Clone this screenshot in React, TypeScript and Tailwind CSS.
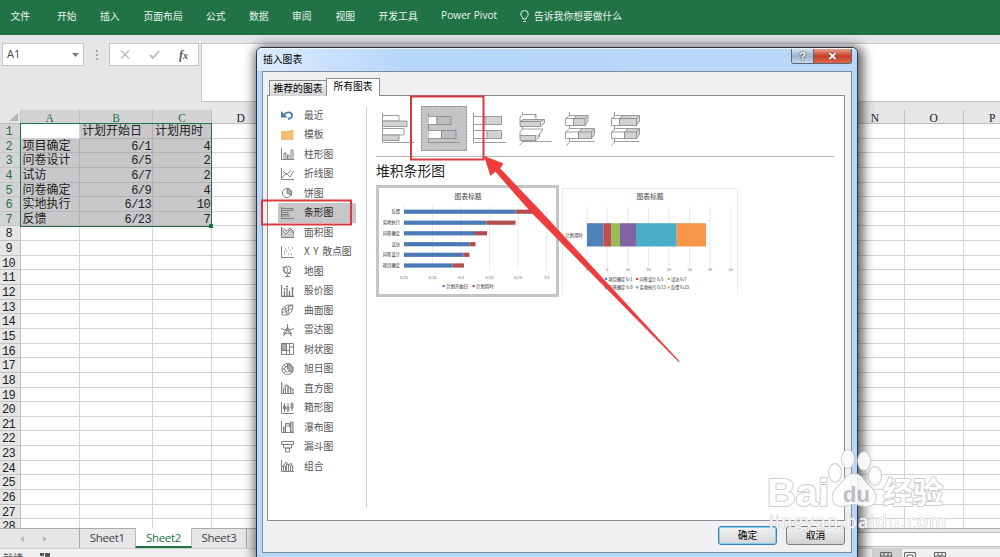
import type { ReactNode } from "react";

const ribbonTabs = [
  { label: "文件", cls: "w-[46.5px]" },
  { label: "开始", cls: "w-[43px]" },
  { label: "插入", cls: "w-[43.5px]" },
  { label: "页面布局", cls: "w-[62.5px]" },
  { label: "公式", cls: "w-[43px]" },
  { label: "数据", cls: "w-[43px]" },
  { label: "审阅", cls: "w-[43.5px]" },
  { label: "视图", cls: "w-[43px]" },
  { label: "开发工具", cls: "w-[62.5px]" },
];

const tasks = [
  ["", "计划开始日", "计划用时"],
  ["项目确定", "6/1", "4"],
  ["问卷设计", "6/5", "2"],
  ["试访", "6/7", "2"],
  ["问卷确定", "6/9", "4"],
  ["实地执行", "6/13", "10"],
  ["反馈", "6/23", "7"],
];

const columns = [
  { name: "A", cls: "w-[59.5px]" },
  { name: "B", cls: "w-[73px]" },
  { name: "C", cls: "w-[59px]" },
  { name: "D", cls: "w-[58.5px]" },
  { name: "", cls: "w-[575.5px]" },
  { name: "N", cls: "w-[59px]" },
  { name: "O", cls: "w-[58.5px]" },
  { name: "P", cls: "w-[58.5px]" },
];

const chartTypes: { name: string; icon: ReactNode }[] = [
  { name: "最近", icon: <><path d="M3 6C5 2.500 10 2.500 11 5.500c.6 2.500-1.500 4-4 4.500" stroke="#4a7aa8" strokeWidth="1.800" /><path d="M0 2v6.500h6.500z" fill="#4a7aa8" stroke="none" /></> },
  { name: "模板", icon: <path d="M0 2h8l1-1h3.500v10H0z" fill="#ecc076" stroke="none" /> },
  { name: "柱形图", icon: <path d="M.5 0v11.500H13M3 11V5h2v6M6.500 11V7h1.500v4M10 11V2h2v9" /> },
  { name: "折线图", icon: <path d="M.5 0v11.500H13M1 10l4-5 4 4 3.500-6M2 3l4 4 4-5" /> },
  { name: "饼图", icon: <><circle cx="6" cy="6" r="4.600" /><path d="M6 1.400V6l4 2.500A4.600 4.600 0 0 0 6 1.400z" fill="#aaa" /></> },
  { name: "条形图", icon: <path d="M.5 0v11.500H13M1 1.500h11v2H1M1 5.500h6v2H1M1 9h8" /> },
  { name: "面积图", icon: <path d="M.5 1v10.500H13V7.500L9 4 5 8 1 4M1 1.500l4 4L9 2l3.500 3.500v2" fill="#ccc" /> },
  { name: "X Y 散点图", icon: <><path d="M.5 0v11.500H13" /><path d="M3 8h1M5 5h1M7 8h1M9 4h1M11 2h1M4 3h1M10 8h1M7 2h1M3 6h1" strokeWidth="1.200" /></> },
  { name: "地图", icon: <><circle cx="6.500" cy="4.500" r="3.500" /><path d="M3 1C0 6 5 11 10 8M6.500 9.500v2M4 11.500h5M5 2l2 2-1 3" /></> },
  { name: "股价图", icon: <path d="M.5 0v11.500H13M3.500 11V6M6 11V3M8.500 11V6M11.500 11V2M2.500 4h2M5 1.500h2M10.500 4h2" strokeWidth="1.300" /> },
  { name: "曲面图", icon: <path d="M1 5l5-4h6l-1 6-4 4H1zM1 5c3 2 5-2 11-4M1 8c4 1 6-3 10-3M4 3l2 8M8 1L7 10" /> },
  { name: "雷达图", icon: <path d="M6.500 0v6M0 4.500l6.500 2L13 4.500M2.500 12l4-6 4 6M6.500 3l2 3 2 4-4-1-4 1 2-4z" /> },
  { name: "树状图", icon: <><path d="M.5.5h12v11H.5z" /><path d="M.5.5h5v7h-5z" fill="#aaa" /><path d="M.5 7.500h8M8.500.5v11M8.500 4h4M5.500 7v4" /></> },
  { name: "旭日图", icon: <><circle cx="6.500" cy="6" r="5.600" /><circle cx="6.500" cy="6" r="3" /><path d="M6.500.5V6l4 4A5.600 5.600 0 0 0 6.500.5zM1 6h3M3 2l2 2M3 10l2-2" fill="#aaa" /></> },
  { name: "直方图", icon: <path d="M.5 0v11.500H13M2.500 11V7h2v4M4.500 11V3h2.500v8M7 11V5h2.500v6M9.500 7H12v4" fill="#ddd" /> },
  { name: "箱形图", icon: <path d="M.5 0v11.500H13M3.500 1v9M7 1v9M11 0v9M2.500 4h2v3h-2zM6 5h2v3H6zM10 2h2v4h-2z" /> },
  { name: "瀑布图", icon: <><path d="M.5 0v11.500H13" /><path d="M2.500 11V6h2v5M4.500 6V2.500h4V6M9.500 1H12v10H9.500z" fill="#ccc" /></> },
  { name: "漏斗图", icon: <path d="M.5.5h12v3H.5zM2.500 3.500h8V7h-8zM4.500 7h4v4h-4z" /> },
  { name: "组合", icon: <path d="M.5 0v11.500H13M2.500 11V6h2v5M5.500 11V4h2v7M9.500 11V6h2v5M1 7l4-5 3 4 2-3 2 5" /> },
];

// [name, y, end of start-date bar, end of duration bar]
const ganttRows: [string, number, number, number][] = [
  ["反馈", 26.7, 139.5, 162],
  ["实地执行", 37.7, 110.5, 139.5],
  ["问卷确定", 48.3, 99, 111],
  ["试访", 59.2, 93.5, 99.5],
  ["问卷设计", 69.8, 87.5, 93.5],
  ["项目确定", 80.5, 76.5, 88],
];

const stacked: [number, number, string][] = [
  [25, 16.3, "#4f81bd"],
  [41.3, 7.7, "#c0504d"],
  [49, 9, "#9bbb59"],
  [58, 16, "#8064a2"],
  [74, 40.7, "#4bacc6"],
  [114.7, 29.3, "#f79646"],
];

const stackedLegend: [number, number, string, string][] = [
  [43, 91, "#4f81bd", "项目确定 6/1"],
  [74, 91, "#c0504d", "问卷设计 6/5"],
  [105.5, 91, "#9bbb59", "试访 6/7"],
  [43, 99.5, "#8064a2", "问卷确定 6/9"],
  [74, 99.5, "#4bacc6", "实地执行 6/13"],
  [105.5, 99.5, "#f79646", "反馈 6/23"],
];

function Ribbon() {
  return (
    <div className="h-[35px] bg-[#217346] flex items-center pl-[10.5px] pb-[3px] text-[9.8px] text-[#e9f3ed] whitespace-nowrap">
      {ribbonTabs.map((t) => (
        <span key={t.label} className={`shrink-0 ${t.cls}`}>{t.label}</span>
      ))}
      <span className="w-[79px] shrink-0 text-[10.2px] font-['Open_Sans',sans-serif]">Power Pivot</span>
      <svg width="9" height="13" viewBox="0 0 9 13" fill="none" stroke="#e9f3ed" className="mr-[5px] shrink-0">
        <path d="M3 9C3 7 .8 6.500.8 4a3.700 3.500 0 0 1 7.400 0C8.200 6.500 6 7 6 9zM3 11.500h3" />
      </svg>
      <span>告诉我你想要做什么</span>
    </div>
  );
}

function FormulaBar() {
  return (
    <div className="h-[75px] bg-[#e6e5e7] flex items-start pt-[8px] pl-[2px]">
      <div className="w-[82px] h-[23px] bg-white border border-[#c8c7c9] flex items-center justify-between pl-[4px] pr-[4px] text-[11px] text-[#444] font-['Open_Sans',sans-serif]">
        A1
        <svg width="7" height="4"><path d="M0 0h7L3.500 4z" fill="#777" /></svg>
      </div>
      <div className="w-[25px] h-[23px] flex flex-col items-center justify-center gap-[2px]">
        <i className="w-[2px] h-[2px] bg-[#aaa]" />
        <i className="w-[2px] h-[2px] bg-[#aaa]" />
        <i className="w-[2px] h-[2px] bg-[#aaa]" />
      </div>
      <div className="w-[90px] h-[23px] bg-white border border-[#c8c7c9] flex items-center pl-[10px]">
        <svg width="10" height="9" fill="none" stroke="#bbb" strokeWidth="1.3"><path d="M1 .5l8 8M9 .5l-8 8" /></svg>
        <svg width="11" height="9" fill="none" stroke="#bbb" strokeWidth="1.8" className="ml-[19px]"><path d="M1 5l3 3 6-7" /></svg>
        <span className="ml-[19px] text-[12px] italic font-bold text-[#555] font-['Liberation_Serif',serif]">f<span className="text-[10px]">x</span></span>
      </div>
      <div className="ml-[2px] flex-1 h-[59px] bg-white border border-r-0 border-[#c8c7c9]" />
    </div>
  );
}

function Sheet() {
  return (
    <div className="h-[418px] overflow-hidden bg-white font-['Liberation_Mono','Noto_Sans_CJK_SC',monospace] text-[12px] text-[#222]">
      <div className="h-[14px] flex bg-[#e6e5e7] border-b border-[#bbb]">
        <div className="w-[20.5px] shrink-0 flex justify-end items-end pr-[2px] pb-[2px] border-r border-[#c4c4c4]">
          <svg width="9" height="8"><path d="M9 0v8H0z" fill="#b5b5b7" /></svg>
        </div>
        {columns.map((c, i) => (
          <div key={i} className={`shrink-0 ${c.cls} border-r border-[#bfbfbf] text-center leading-[16px] font-['Liberation_Serif',serif] text-[11.5px] ${i < 3 ? "bg-[#d3d2d4] text-[#217346]" : ""}`}>
            {c.name}
          </div>
        ))}
      </div>
      {Array.from({ length: 28 }, (_, r) => (
        <div key={r} className="flex h-[14.65px]">
          <div className={`w-[20.5px] shrink-0 border-r border-b border-[#c4c4c4] leading-[17px] tracking-[-0.6px] ${r < 7 ? "bg-[#d3d2d4] text-[#217346]" : "bg-[#e6e5e7]"} ${r < 9 ? "pl-[5.5px]" : "pl-[2px]"}`}>
            {r + 1}
          </div>
          {columns.map((c, i) => {
            const selected = r < 7 && i < 3 && r + i > 0;
            const text = r < 7 && i < 3 ? tasks[r][i] : "";
            return (
              <div
                key={i}
                className={`shrink-0 ${c.cls} border-r border-b pl-[2px] pr-[1px] leading-[17px] whitespace-nowrap ${selected ? "bg-[#c8c7ca] border-[#b2b1b4]" : "border-[#d4d4d4]"} ${r > 0 && i > 0 ? "text-right tracking-[-0.6px]" : ""}`}
              >
                {text}
              </div>
            );
          })}
        </div>
      ))}
      <div className="absolute left-[20px] top-[123px] w-[192px] h-[104px] border-[1.5px] border-[#217346]">
        <div className="absolute -right-[2px] -bottom-[2px] w-[4px] h-[4px] bg-[#217346]" />
      </div>
    </div>
  );
}

function SheetTabs() {
  return (
    <>
      <div className="h-[20px] bg-[#e6e5e7] border-t border-[#ababab] flex text-[11.5px] text-[#444] font-['Open_Sans',sans-serif]">
        <div className="w-[79.5px] flex items-center gap-[19px] pl-[20px] border-r border-[#aaa]">
          <svg width="4" height="6"><path d="M4 0v6L0 3z" fill="#bbb" /></svg>
          <svg width="4" height="6"><path d="M0 0v6l4-3z" fill="#bbb" /></svg>
        </div>
        <div className="w-[55.5px] text-center leading-[18px] tracking-[-0.3px]">Sheet1</div>
        <div className="w-[57px] -mt-px bg-white text-[#217346] text-center leading-[19px] tracking-[-0.3px] border-x border-[#bbb] border-b-2 border-b-[#217346]">Sheet2</div>
        <div className="w-[55px] text-center leading-[18px] tracking-[-0.3px] border-r border-[#aaa]">Sheet3</div>
        <div className="ml-auto w-[145px] h-[15px] mt-[3px] bg-white border-y border-[#bbb]" />
      </div>
      <div className="h-[9px] overflow-hidden bg-[#f0eff1] border-t border-[#cfcfcf] flex text-[10px] leading-[18px] text-[#444] pl-[3px]">
        就绪
        <svg width="12" height="8" className="ml-[16px] mt-[3px]" fill="#555"><path d="M1 1h4v3H1zM6 1h5v7H6zM0 5h5v3H0z" /></svg>
        <div className="ml-auto mr-[54px] flex items-start">
          <div className="w-[30px] h-[9px] bg-[#cfced0] pl-[8px] pt-[3px]">
            <svg width="12" height="6" fill="none" stroke="#666"><path d="M.5 8V.5h11V8M4 0v8M8 0v8M0 4h12" /></svg>
          </div>
          <svg width="12" height="6" fill="none" stroke="#666" className="ml-[2px] mt-[3px]"><path d="M.5 8V.5h11V8M3 8V3h6v5" /></svg>
          <svg width="12" height="6" fill="none" stroke="#666" className="ml-[18px] mt-[3px]"><path d="M.5 8V.5h11V8M4 0v4h4V0M0 4h12" /></svg>
        </div>
      </div>
    </>
  );
}

function TypeList() {
  return (
    <div className="w-[99px] h-[400px] mt-[11px] border-r border-[#cfcfd1] pl-[10px] shrink-0">
      <div className="-mt-[1.5px] -mr-px">
        {chartTypes.map((t) => (
          <div
            key={t.name}
            className={`h-[19.5px] w-[78px] flex items-center pl-[3px] text-[9.8px] whitespace-nowrap ${t.name === "条形图" ? "bg-[#c6c5c8] text-[#222]" : "text-[#555]"} ${t.name.startsWith("X") ? "[word-spacing:1.5px]" : ""}`}
          >
            <svg width="13" height="12" viewBox="0 0 13 12" fill="none" stroke="#777" strokeWidth=".9" className="mr-[10px] shrink-0">{t.icon}</svg>
            {t.name}
          </div>
        ))}
      </div>
    </div>
  );
}

function SubtypeIcons() {
  return (
    <svg width="270" height="50" viewBox="380 103 270 50" fill="none" stroke="#858587" strokeWidth=".8" className="block">
      <path d="M382.500 113v29.500H414" />
      <path d="M383 115.500h16v5.500h-16M383 128.500h21v6.500h-21" fill="#fff" />
      <path d="M383 121h24v5.500h-24M383 135h16v5.500h-16" fill="#d2d1d4" />
      <path d="M421.500 106.500h45v44h-45z" fill="#c4c3c6" stroke="#666" strokeDasharray="2 1" />
      <path d="M428.500 113v29.500H460" />
      <path d="M428.500 116.500h8.500v8h-8.500M428.500 130.500h13v8h-13" fill="#fff" />
      <path d="M437 116.500h14v8h-14zM441.500 130.500h14.500v8h-14.500z" fill="#bdbcc0" />
      <path d="M473.500 113v29.500H506M474 116.500h12M474 124.500h12M474 130.500h13M474 138.500h13" />
      <path d="M485 116.500h16.500v8H485zM487 130.500h14.500v8H487z" fill="#d2d1d4" />
      {/* 3-D variants */}
      <path d="M522.500 112v30l-3 3.500M522.500 141.500h29" />
      <path d="M520 117l3-2.500h13v4l-2 3h-14zM520 131.500l3-2.500h20l-2 3-3 4h-18z" fill="#fff" />
      <path d="M534 117l2-2.500" />
      <path d="M520 121.500h20.500v5H520zM520 121.500l3-2h21.500l-4 2M540.500 126.500l4-3.500v-3.500M520 135.500h15.500v5H520zM535.500 140.500l4-3.500v-4" fill="#d2d1d4" />
      <path d="M569.500 112v30l-3 3.500M569.500 141.500h25" />
      <path d="M565.500 118.500l4-3h8l-4 3v7h-8zM565.500 132l4-3.500h13l-4 3.500v6.500h-13zM565.500 118.500h8M565.500 132h13" fill="#fff" />
      <path d="M573.500 118.500l3-3h11.500v6l-3 4h-11.500zM578.500 132l4-3.500h12v6l-3 4h-13z" fill="#d2d1d4" />
      <path d="M573.500 118.500H585v7M585 118.500l3-3M578.500 132h13v6.500M591.500 132l3-3.500" />
      <path d="M614.500 112v30l-3 3.500M614.500 141.500h25" />
      <path d="M611.500 118.500l4-3h8l-4 3v7h-8zM611.500 132l4-3.500h13l-4 3.500v6.500h-13zM611.500 118.500h8M611.500 132h13" fill="#fff" />
      <path d="M619.500 118.500l4-3h16v6l-3 4h-17zM624.500 132l4-3.500h11v6l-3 4h-12z" fill="#d2d1d4" />
      <path d="M619.500 118.500h17v7M636.500 118.500l3-3M624.500 132h12v6.500M636.500 132l3-3.500" />
    </svg>
  );
}

function GanttPreview() {
  return (
    <div className="w-[183px] h-[112px] border-[3px] border-[#c5c4c7] bg-white">
      <svg width="177" height="106" viewBox="3 3 177 106" className="block">
        <text x="92" y="13.5" textAnchor="middle" fontSize="6.8" fill="#444">图表标题</text>
        {[28, 56.5, 85, 113.5, 142, 170.5].map((x, i) => (
          <g key={x}>
            <path d={`M${x} 21v64`} stroke="#e4e4e8" strokeWidth=".7" />
            <text x={x} y="93.5" textAnchor="middle" fontSize="3.8" fill="#666">{["5/15", "5/25", "6/4", "6/14", "6/24", "7/4"][i]}</text>
          </g>
        ))}
        {ganttRows.map(([name, y, a, b]) => (
          <g key={name}>
            <text x="24" y={y + 1.5} textAnchor="end" fontSize="4.3" fill="#222">{name}</text>
            <rect x="28" y={y - 2.1} width={a - 28} height="4.2" fill="#4a7ab5" />
            <rect x={a} y={y - 2.1} width={b - a} height="4.2" fill="#b24f4d" />
          </g>
        ))}
        <rect x="66.5" y="100" width="2.2" height="2.2" fill="#4a7ab5" />
        <text x="70" y="102.7" fontSize="4.4" fill="#222">计划开始日</text>
        <rect x="96.5" y="100" width="2.2" height="2.2" fill="#b24f4d" />
        <text x="100" y="102.7" fontSize="4.4" fill="#222">计划用时</text>
      </svg>
    </div>
  );
}

function StackedPreview() {
  return (
    <div className="w-[176px] h-[106px] mt-[3px] ml-[3px] border border-b-0 border-[#ececee] bg-white">
      <svg width="174" height="104" viewBox="1 1 174 104" className="block">
        <text x="88" y="10.5" textAnchor="middle" fontSize="6.8" fill="#444">图表标题</text>
        {[25, 45.3, 66, 86.5, 107, 127.7, 148, 168.7].map((x, i) => (
          <g key={x}>
            <path d={`M${x} 19v60`} stroke="#dedee6" strokeWidth=".7" />
            <text x={x} y="82.5" textAnchor="middle" fontSize="3.8" fill="#666">{i * 5}</text>
          </g>
        ))}
        {stacked.map(([x, w, fill]) => (
          <rect key={x} x={x} y="35.2" width={w} height="23.3" fill={fill} />
        ))}
        <text x="20.5" y="49" textAnchor="end" fontSize="4.3" fill="#222">计划用时</text>
        {stackedLegend.map(([x, y, fill, name]) => (
          <g key={name}>
            <rect x={x} y={y - 1.2} width="2.2" height="2.2" fill={fill} />
            <text x={x + 3.5} y={y + 1.5} fontSize="4.2" fill="#222">{name}</text>
          </g>
        ))}
      </svg>
    </div>
  );
}

function ChartDialog() {
  return (
    <div className="absolute left-[256px] top-[47px] w-[602px] h-[512px] rounded-t-[6px] border border-[#2b3440] bg-[#b9d7f8] shadow-[2px_2px_12px_3px_rgba(0,0,0,0.65)] flex flex-col">
      <div className="h-[23px] shrink-0 rounded-t-[5px] border-t border-white/70 bg-linear-to-r from-[#dcebfc] via-[#b6d6fa] via-25% to-[#b9d7f8] flex items-start pl-[6px] pr-[5px]">
        <span className="text-[9.8px] leading-[20px] text-black">插入图表</span>
        <div className="ml-auto h-[15px] flex border border-t-0 border-[#5d6670] rounded-b-[3px] overflow-hidden">
          <div className="w-[22px] border-r border-[#5d6670] bg-linear-to-b from-[#d5e0ed] via-[#9fb4cb] to-[#c5d8ec] flex justify-center">
            <span className="text-[11px] leading-[14px] font-bold text-white [text-shadow:0_0_1px_#333,0_0_2px_#333] font-['Liberation_Sans',sans-serif]">?</span>
          </div>
          <div className="w-[37px] bg-linear-to-b from-[#e6a08e] via-[#c73d25] to-[#d9674a] flex items-center justify-center">
            <svg width="9" height="8" fill="none"><path d="M1.500 1l6 6M7.500 1l-6 6" stroke="#5c2a25" strokeWidth="3" /><path d="M1.500 1l6 6M7.500 1l-6 6" stroke="#fff" strokeWidth="1.8" /></svg>
          </div>
        </div>
      </div>
      <div className="h-[482px] mx-[5px] border border-[#7b8c9f] bg-[#f0eff1] px-[4px] flex flex-col">
        <div className="h-[24px] flex items-end pl-[2px] text-[9.8px] text-black relative -mb-px">
          <div className="w-[58px] h-[16px] border border-b-0 border-[#8c8c8e] bg-linear-to-b from-[#f2f2f2] to-[#d3d2d4] text-center leading-[15px] whitespace-nowrap">推荐的图表</div>
          <div className="w-[54px] h-[18px] -ml-px bg-white border border-b-0 border-[#8c8c8e] text-center leading-[15px] whitespace-nowrap">所有图表</div>
        </div>
        <div className="w-[578px] h-[426px] bg-white border border-[#8c8c8e] flex">
          <TypeList />
          <div className="pl-[9px] pt-[7px]">
            <div className="w-[458px] h-[54px] border-b border-[#b5b4b7] pl-[4px]">
              <SubtypeIcons />
            </div>
            <div className="text-[13.8px] leading-[27px] h-[28px] text-[#222]">堆积条形图</div>
            <div className="flex">
              <GanttPreview />
              <StackedPreview />
            </div>
          </div>
        </div>
        <div className="flex gap-[9px] pt-[5px] justify-end pr-[2px] text-[9.8px] text-black">
          <div className="w-[59px] h-[19px] rounded-[3px] border border-[#3c7fb1] shadow-[inset_0_0_0_1px_#7fd0f0] bg-linear-to-b from-[#f3f3f3] to-[#d6d6d8] text-center leading-[17px]">确定</div>
          <div className="w-[59px] h-[19px] rounded-[3px] border border-[#7d7d7f] bg-linear-to-b from-[#f3f3f3] to-[#d2d1d4] text-center leading-[17px]">取消</div>
        </div>
      </div>
    </div>
  );
}

function Markers() {
  return (
    <svg width="1000" height="557" className="absolute left-0 top-0 pointer-events-none" fill="none">
      <rect x="262" y="200.5" width="89" height="24" stroke="#d83b3d" strokeWidth="2" />
      <rect x="411" y="96.5" width="72.5" height="63" stroke="#d83b3d" strokeWidth="2" />
      <path d="M484.500 156.500L503 163.500 500 168.500 541 211.500 679.500 361.500 678 361 531 212 495.500 171.500 490.500 175.500z" fill="#f03c3c" stroke="#c9302f" strokeWidth=".5" />
    </svg>
  );
}

function Watermark() {
  return (
    <svg width="190" height="90" viewBox="762 448 190 90" className="absolute left-[762px] top-[448px] pointer-events-none opacity-90" fill="#fff" stroke="#c9c9cb" strokeWidth="2" strokeLinejoin="round" paintOrder="stroke" fontFamily="'Liberation Sans','Noto Sans CJK SC',sans-serif">
      <text x="767" y="506" fontSize="38" fontWeight="bold" textLength="62" lengthAdjust="spacingAndGlyphs">Bai</text>
      <ellipse cx="835" cy="473" rx="6" ry="9" />
      <ellipse cx="848" cy="459" rx="6" ry="9" />
      <ellipse cx="864" cy="461" rx="6" ry="9" />
      <ellipse cx="875" cy="476" rx="6" ry="9" />
      <path d="M854 474c9 0 10 9 16 13 8 6 8 19-3 19-6 0-8-2-13-2s-7 2-12 2c-11 0-12-12-4-19 6-5 7-13 16-13z" />
      <text x="843" y="502" fontSize="22" fontWeight="bold" fill="#bdbdc0" stroke="#fff" strokeWidth="1">du</text>
      <text x="883" y="503" fontSize="30" fontWeight="bold" textLength="60" lengthAdjust="spacingAndGlyphs">经验</text>
      <text x="769" y="528" fontSize="18" strokeWidth="1.2" fontFamily="'Open Sans',sans-serif" textLength="177" lengthAdjust="spacing">jingyan.baidu.com</text>
    </svg>
  );
}

export default function App() {
  return (
    <div className="relative w-[1000px] h-[557px] overflow-hidden bg-[#e6e5e7] font-['Noto_Sans_CJK_SC',sans-serif]">
      <Ribbon />
      <FormulaBar />
      <Sheet />
      <SheetTabs />
      <ChartDialog />
      <Markers />
      <Watermark />
    </div>
  );
}
